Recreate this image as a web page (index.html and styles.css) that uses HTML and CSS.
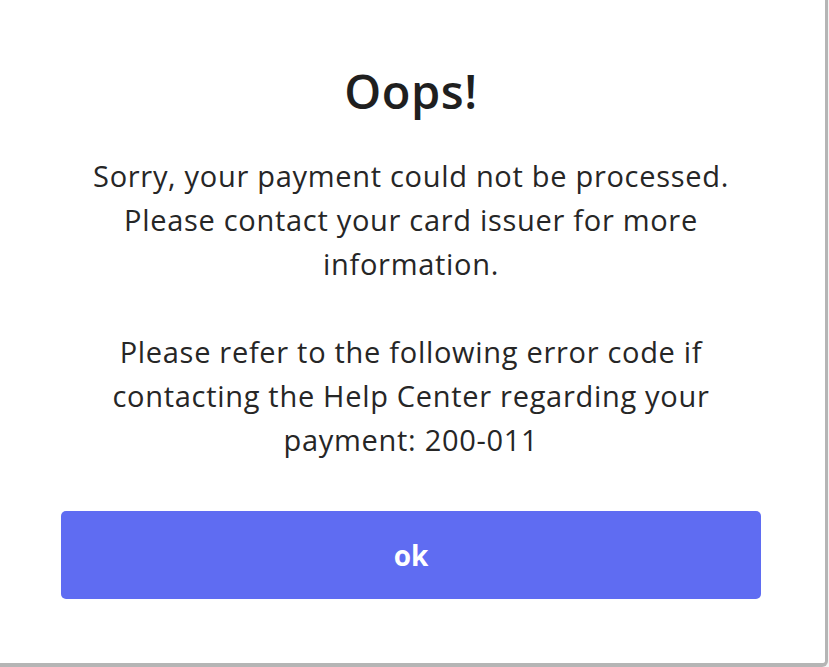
FILE: index.html
```html
<!DOCTYPE html>
<html>
<head>
<meta charset="utf-8">
<link rel="stylesheet" href="styles.css">
</head>
<body>
<div class="modal">
  <h1 class="title">Oops!</h1>
  <div class="message">
    <p>Sorry, your payment could not be processed.<br>Please contact your card issuer for more<br>information.</p>
    <p>Please refer to the following error code if<br>contacting the Help Center regarding your<br>payment: 200-011</p>
  </div>
  <button class="ok-btn">ok</button>
</div>
</body>
</html>
```
FILE: styles.css
```css
html, body {
  margin: 0;
  padding: 0;
  background: #f4f4f4;
  overflow: hidden;
}
body {
  width: 829px;
  height: 667px;
  font-family: "Open Sans", "Noto Sans", sans-serif;
  color: #222222;
}
.modal {
  box-sizing: border-box;
  margin-left: -3px;
  width: 831px;
  height: 667px;
  background: #ffffff;
  border-right: 3px solid #b5b5b5;
  border-bottom: 4px solid #b5b5b5;
  border-bottom-right-radius: 6px;
  padding: 62px 64px 0 64px;
  display: flex;
  flex-direction: column;
  align-items: center;
}
.title {
  margin: 0;
  font-size: 47px;
  line-height: 58px;
  font-weight: 600;
  letter-spacing: 0.5px;
  color: #1f1f1f;
}
.message {
  margin-top: 34px;
  text-align: center;
  font-size: 29px;
  line-height: 44px;
  letter-spacing: 0.7px;
  color: #262626;
}
.message p {
  margin: 0 0 44px 0;
}
.message p:last-child {
  margin-bottom: 0;
}
.ok-btn {
  margin-top: 49px;
  width: 700px;
  height: 88px;
  border: none;
  border-radius: 5px;
  background: #5f6cf2;
  color: #ffffff;
  font-family: inherit;
  font-size: 28px;
  font-weight: 700;
  cursor: pointer;
}
```
